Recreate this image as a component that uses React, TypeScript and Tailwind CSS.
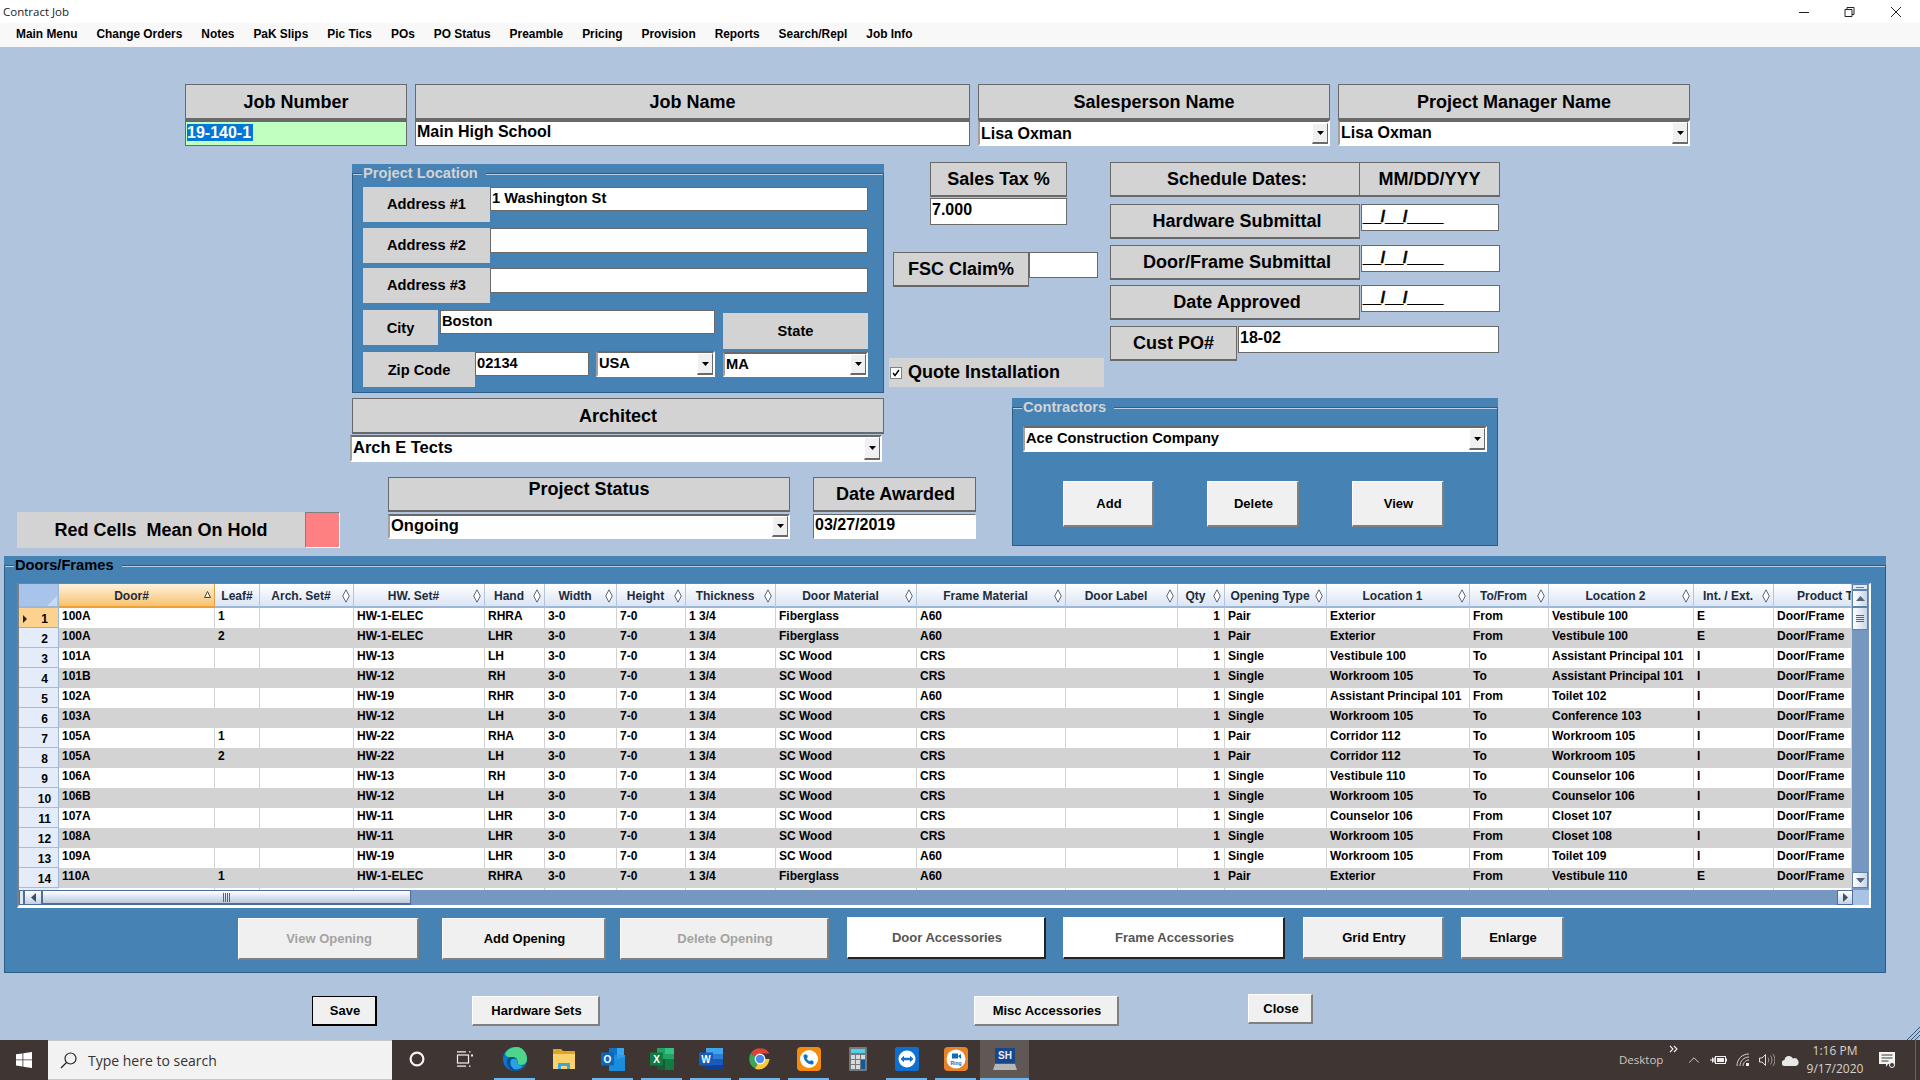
import type { ReactNode } from 'react'
import { ChevronUp, Phone } from 'lucide-react'

const menus = ['Main Menu', 'Change Orders', 'Notes', 'PaK Slips', 'Pic Tics', 'POs', 'PO Status', 'Preamble', 'Pricing', 'Provision', 'Reports', 'Search/Repl', 'Job Info']

const columns = [
  { label: 'Door#', w: 'w-[156px]', sort: true },
  { label: 'Leaf#', w: 'w-[45px]', plain: true },
  { label: 'Arch. Set#', w: 'w-[94px]' },
  { label: 'HW. Set#', w: 'w-[131px]' },
  { label: 'Hand', w: 'w-[60px]' },
  { label: 'Width', w: 'w-[72px]' },
  { label: 'Height', w: 'w-[69px]' },
  { label: 'Thickness', w: 'w-[90px]' },
  { label: 'Door Material', w: 'w-[141px]' },
  { label: 'Frame Material', w: 'w-[149px]' },
  { label: 'Door Label', w: 'w-[112px]' },
  { label: 'Qty', w: 'w-[47px]' },
  { label: 'Opening Type', w: 'w-[102px]' },
  { label: 'Location 1', w: 'w-[143px]' },
  { label: 'To/From', w: 'w-[79px]' },
  { label: 'Location 2', w: 'w-[145px]' },
  { label: 'Int. / Ext.', w: 'w-[80px]' },
  { label: 'Product Type', w: 'w-[78px]', clipped: true },
]

const rows = [
  ['100A', '1', 'HW-1-ELEC', 'RHRA', 'Fiberglass', 'A60', 'Pair', 'Exterior', 'From', 'Vestibule 100', 'E'],
  ['100A', '2', 'HW-1-ELEC', 'LHR', 'Fiberglass', 'A60', 'Pair', 'Exterior', 'From', 'Vestibule 100', 'E'],
  ['101A', '', 'HW-13', 'LH', 'SC Wood', 'CRS', 'Single', 'Vestibule 100', 'To', 'Assistant Principal 101', 'I'],
  ['101B', '', 'HW-12', 'RH', 'SC Wood', 'CRS', 'Single', 'Workroom 105', 'To', 'Assistant Principal 101', 'I'],
  ['102A', '', 'HW-19', 'RHR', 'SC Wood', 'A60', 'Single', 'Assistant Principal 101', 'From', 'Toilet 102', 'I'],
  ['103A', '', 'HW-12', 'LH', 'SC Wood', 'CRS', 'Single', 'Workroom 105', 'To', 'Conference 103', 'I'],
  ['105A', '1', 'HW-22', 'RHA', 'SC Wood', 'CRS', 'Pair', 'Corridor 112', 'To', 'Workroom 105', 'I'],
  ['105A', '2', 'HW-22', 'LH', 'SC Wood', 'CRS', 'Pair', 'Corridor 112', 'To', 'Workroom 105', 'I'],
  ['106A', '', 'HW-13', 'RH', 'SC Wood', 'CRS', 'Single', 'Vestibule 110', 'To', 'Counselor 106', 'I'],
  ['106B', '', 'HW-12', 'LH', 'SC Wood', 'CRS', 'Single', 'Workroom 105', 'To', 'Counselor 106', 'I'],
  ['107A', '', 'HW-11', 'LHR', 'SC Wood', 'CRS', 'Single', 'Counselor 106', 'From', 'Closet 107', 'I'],
  ['108A', '', 'HW-11', 'LHR', 'SC Wood', 'CRS', 'Single', 'Workroom 105', 'From', 'Closet 108', 'I'],
  ['109A', '', 'HW-19', 'LHR', 'SC Wood', 'A60', 'Single', 'Workroom 105', 'From', 'Toilet 109', 'I'],
  ['110A', '1', 'HW-1-ELEC', 'RHRA', 'Fiberglass', 'A60', 'Pair', 'Exterior', 'From', 'Vestibule 110', 'E'],
]

function rowCells(r: string[]) {
  return [r[0], r[1], '', r[2], r[3], '3-0', '7-0', '1 3/4', r[4], r[5], '', '1', r[6], r[7], r[8], r[9], r[10], 'Door/Frame']
}

const textSizes = {
  sm: 'text-[14.67px]',
  md: 'text-[16px]',
  lg: 'text-[16.5px]',
}

// big grey caption with a border
function Caption({ children, className = '' }: { children: ReactNode; className?: string }) {
  return (
    <div className={`flex items-center justify-center border border-[#696969] border-b-2 bg-[#d3d3d3] text-[18px] font-bold ${className}`}>
      {children}
    </div>
  )
}

// smaller caption inside the location box, no border
function Tag({ children, className = '' }: { children: ReactNode; className?: string }) {
  return <div className={`flex items-center justify-center bg-[#d3d3d3] text-[14.67px] font-bold ${className}`}>{children}</div>
}

function Field({ children, className = '', size = 'md' }: { children?: ReactNode; className?: string; size?: 'sm' | 'md' | 'lg' }) {
  return (
    <div className={`overflow-hidden whitespace-nowrap border border-[#696969] bg-white pl-px font-bold leading-[20px] ${textSizes[size]} ${className}`}>
      {children}
    </div>
  )
}

function DateMask({ className = '' }: { className?: string }) {
  return (
    <Field className={`pt-[2px] [-webkit-text-stroke:0.5px_#000] ${className}`}>__/__/____</Field>
  )
}

function Combo({ value, className = '', size = 'md' }: { value: string; className?: string; size?: 'sm' | 'md' | 'lg' }) {
  return (
    <div className={`flex border-2 border-t-[#696969] border-l-[#a0a0a0] border-r-white border-b-white bg-white ${className}`}>
      <div className={`flex-1 overflow-hidden whitespace-nowrap pl-px font-bold leading-[21px] ${textSizes[size]}`}>{value}</div>
      <div className="flex w-[16px] items-center justify-center border border-t-white border-l-white border-r-[#696969] border-b-2 border-b-[#696969] bg-[#f0f0f0]">
        <svg width="7" height="4" viewBox="0 0 7 4"><path d="M0 0h7L3.5 4z" fill="#000" /></svg>
      </div>
    </div>
  )
}

function Btn({ children, className = '', disabled, white, focused }: { children: ReactNode; className?: string; disabled?: boolean; white?: boolean; focused?: boolean }) {
  let look = 'bg-[#f0f0f0] border-t-white border-l-white border-b-[#808080] border-r-[#808080] text-black'
  if (white) look = 'bg-white border-t-white border-l-white border-b-[#222] border-r-[#222] text-[#555]'
  if (disabled) look = 'bg-[#f0f0f0] border-t-white border-l-white border-b-[#808080] border-r-[#808080] text-[#a3a3a3]'
  if (focused) look = 'bg-[#f0f0f0] border-t-black border-l-black border-b-black border-r-black text-black'
  return (
    <button className={`flex shrink-0 items-center justify-center border border-b-2 border-r-2 pl-[2px] text-[13px] font-bold ${look} ${className}`}>
      {children}
    </button>
  )
}

function GroupBox({ title, dark, className = '', children }: { title: string; dark?: boolean; className?: string; children: ReactNode }) {
  return (
    <div className={`shrink-0 bg-[#4682b4] ${className}`}>
      <fieldset className="h-full border border-[#2c5d87] shadow-[inset_0_1px_0_#bcd1e6]">
        <legend className={`ml-[9px] bg-[#4682b4] pl-px pr-2 text-[14.67px] font-bold leading-[18px] ${dark ? 'text-black' : 'text-[#d3d3d3]'}`}>{title}</legend>
        {children}
      </fieldset>
    </div>
  )
}

function SortGlyph({ up }: { up?: boolean }) {
  if (up) {
    return (
      <svg width="7" height="7" viewBox="0 0 7 7" className="mr-[3px] mb-[4px] shrink-0">
        <path d="M3.5.5L6.5 6.5H.5z" fill="#fff3d6" stroke="#444" />
      </svg>
    )
  }
  return (
    <svg width="8" height="14" viewBox="0 0 8 14" className="mr-[3px] shrink-0">
      <path d="M4 .8L7.3 7 4 13.2.7 7z" fill="#fff" stroke="#5a6675" />
    </svg>
  )
}

function DoorGrid() {
  return (
    <div className="flex h-[325px] w-[1854px] flex-col border-t border-l-2 border-t-[#808080] border-l-[#808080] border-r-2 border-b-[3px] border-r-white border-b-white bg-[#7698c0]">
      <div className="flex h-[306px]">
        <div className="w-[1833px] overflow-hidden">
          <table className="w-[1833px] table-fixed border-separate border-spacing-0 text-[12px] font-bold">
            <thead>
              <tr>
                <th className="h-[24px] w-[40px] border-r border-b-2 border-r-[#9db7d6] border-b-[#9db7d6] bg-[#a9c4ea] p-0 align-bottom">
                  <svg width="10" height="10" viewBox="0 0 10 10" className="ml-auto mr-px"><path d="M10 0v10H0z" fill="#c9daf2" /></svg>
                </th>
                {columns.map((c) => (
                  <th
                    key={c.label}
                    className={`h-[24px] border-r border-b-2 p-0 pt-[2px] font-bold text-[#1c2b3c] ${c.w} ${
                      c.sort
                        ? 'border-r-[#e2a24c] border-b-[#f0a030] bg-linear-to-b from-[#fdf1da] to-[#f8c26c]'
                        : 'border-r-[#b3c6de] border-b-[#9db7d6] bg-linear-to-b from-white to-[#dbe5f3]'
                    }`}
                  >
                    {c.clipped ? (
                      <div className="overflow-hidden whitespace-nowrap pl-[23px] text-left">{c.label}</div>
                    ) : (
                      <div className="flex h-full items-center overflow-hidden">
                        <span className="flex-1 whitespace-nowrap text-center">{c.label}</span>
                        {!c.plain && <SortGlyph up={c.sort} />}
                      </div>
                    )}
                  </th>
                ))}
              </tr>
            </thead>
            <tbody>
              {rows.map((r, i) => (
                <tr key={i}>
                  <td
                    className={`relative h-[20px] border-r border-b p-0 pl-3 pt-[3px] text-center align-top leading-[16px] ${
                      i === 0 ? 'border-r-[#9db7d6] border-b-[#f0a030] bg-[#fdd28e]' : 'border-r-[#9db7d6] border-b-[#a8bcd6] bg-[#e3ecf8]'
                    }`}
                  >
                    {i === 0 && (
                      <svg width="4" height="8" viewBox="0 0 4 8" className="absolute left-[4px] top-[7px]"><path d="M0 0l4 4-4 4z" fill="#222" /></svg>
                    )}
                    {i + 1}
                  </td>
                  {rowCells(r).map((v, j) => (
                    <td
                      key={j}
                      className={`h-[20px] overflow-hidden whitespace-nowrap border-r border-r-[#d3d3d3] p-0 pl-[3px] align-top leading-[16px] ${
                        i % 2 ? 'bg-[#d3d3d3]' : 'bg-white'
                      } ${j === 11 ? 'pr-[4px] text-right' : ''}`}
                    >
                      {v}
                    </td>
                  ))}
                </tr>
              ))}
              <tr>
                <td className="h-[20px] bg-[#e3ecf8]" />
                {columns.map((c) => (
                  <td key={c.label} className="h-[20px] border-r border-r-[#d3d3d3] bg-white" />
                ))}
              </tr>
            </tbody>
          </table>
        </div>
        {/* vertical scrollbar */}
        <div className="flex w-[16px] flex-col bg-[#7698c0]">
          <div className="flex h-[6px] items-center justify-center border border-[#5f82ad] bg-[#dfe8f5]"><div className="h-px w-[8px] bg-[#5f82ad]" /></div>
          <div className="flex h-[17px] items-center justify-center border border-[#5f82ad] bg-linear-to-r from-white to-[#c9d6e8]">
            <svg width="9" height="5" viewBox="0 0 9 5"><path d="M4.5 0L9 5H0z" fill="#51657e" /></svg>
          </div>
          <div className="flex h-[23px] flex-col items-center justify-center gap-px border border-[#5f82ad] bg-linear-to-r from-white to-[#c9d6e8]">
            <div className="h-px w-[8px] bg-[#51657e]" />
            <div className="h-px w-[8px] bg-[#51657e]" />
            <div className="h-px w-[8px] bg-[#51657e]" />
            <div className="h-px w-[8px] bg-[#51657e]" />
          </div>
          <div className="flex-1" />
          <div className="mb-[2px] flex h-[16px] items-center justify-center border border-[#5f82ad] bg-linear-to-r from-white to-[#c9d6e8]">
            <svg width="9" height="5" viewBox="0 0 9 5"><path d="M0 0h9L4.5 5z" fill="#51657e" /></svg>
          </div>
        </div>
      </div>
      {/* horizontal scrollbar */}
      <div className="flex h-[15px]">
        <div className="h-full w-[5px] border border-[#4d6f99] bg-[#dfe8f5]" />
        <div className="flex h-full w-[18px] items-center justify-center border border-[#4d6f99] bg-linear-to-b from-white to-[#c3d1e4]">
          <svg width="5" height="9" viewBox="0 0 5 9"><path d="M5 0v9L0 4.5z" fill="#3c4f66" /></svg>
        </div>
        <div className="flex h-full w-[369px] items-center justify-center border border-b-2 border-[#4d6f99] bg-linear-to-b from-white to-[#b9c9de]">
          <div className="flex gap-px">
            <div className="h-[9px] w-px bg-[#51657e]" />
            <div className="h-[9px] w-px bg-[#51657e]" />
            <div className="h-[9px] w-px bg-[#51657e]" />
            <div className="h-[9px] w-px bg-[#51657e]" />
          </div>
        </div>
        <div className="flex-1" />
        <div className="flex h-full w-[16px] items-center justify-center border border-[#4d6f99] bg-linear-to-b from-white to-[#c3d1e4]">
          <svg width="5" height="9" viewBox="0 0 5 9"><path d="M0 0v9l5-4.5z" fill="#3c4f66" /></svg>
        </div>
        <div className="h-full w-[16px] bg-[#a9c3e6]" />
      </div>
    </div>
  )
}

function TaskSlot({ children, open, active }: { children: ReactNode; open?: boolean; active?: boolean }) {
  return (
    <div className={`flex h-[40px] w-[49px] shrink-0 flex-col items-center ${active ? 'bg-[#5f5854]' : ''}`}>
      <div className="flex h-[38px] items-center justify-center">{children}</div>
      <div className={`h-[2px] ${active ? 'w-full bg-[#6cb6f2]' : open ? 'w-[41px] bg-[#6cb6f2]' : 'w-[41px]'}`} />
    </div>
  )
}

function TaskIcons() {
  return (
    <>
      <TaskSlot>
        <svg width="16" height="16" viewBox="0 0 16 16"><circle cx="8" cy="8" r="6.4" fill="none" stroke="#f4f4f4" strokeWidth="2.2" /></svg>
      </TaskSlot>
      <TaskSlot>
        <svg width="18" height="18" viewBox="0 0 18 18" fill="none" stroke="#f2f2f2" strokeWidth="1.2" className="-ml-[2px]">
          <rect x="1.5" y="5" width="11" height="8" />
          <path d="M1 1.8h9M1 16.2h9M13 1.8h1.5M13 16.2h1.5" />
          <rect x="15" y="4.5" width="2" height="2" fill="#f2f2f2" stroke="none" />
        </svg>
      </TaskSlot>
      <TaskSlot open>
        <svg width="26" height="26" viewBox="0 0 26 26">
          <circle cx="13" cy="13" r="12" fill="#0b78cf" />
          <path d="M3 8C6 2 12 0 17 1.300C22 3 25 8 25 13c0 4-3 6-6 6-3 0-5-2-4-4 .6-1.500-1-4-4.500-4C7 11 5 12 3 8z" fill="#4fd48c" />
          <path d="M5 14c2-4 8-4 10-.5 1 2 0 4 2 5.500 1.500 1 4 .8 5.500-.5C20 23 16 25 13 25c-5 0-9-5-8-11z" fill="#0a4f92" />
          <path d="M9 14c2-2 6-1.500 6 1 0 3 3 5 6 5-2 2.500-5 4-8 3.500-3-1-6-6-4-9.500z" fill="#2aa3e6" />
        </svg>
      </TaskSlot>
      <TaskSlot>
        <svg width="24" height="20" viewBox="0 0 24 20">
          <path d="M1 0h8l2 2h12v17a1 1 0 01-1 1H2a1 1 0 01-1-1z" fill="#e0a526" />
          <path d="M1 5h22v14a1 1 0 01-1 1H2a1 1 0 01-1-1z" fill="#fbd36b" />
          <path d="M6 20v-6h12v6h-3v-3H9v3z" fill="#3ba6e0" />
        </svg>
      </TaskSlot>
      <TaskSlot open>
        <svg width="24" height="24" viewBox="0 0 24 24">
          <path d="M8 1h15v22H8z" fill="#0f74c8" />
          <path d="M16 1h7v7h-7z" fill="#38a7ee" />
          <path d="M8 8h8v7H8z" fill="#1b8fdc" />
          <path d="M16 8h8v8h-8z" fill="#2a9fe8" />
          <path d="M8 14l16-4v14H8z" fill="#1a8ddc" />
          <rect x="0" y="5.500" width="13" height="13" fill="#0b67bd" />
          <text x="6.500" y="15.500" textAnchor="middle" fontFamily="Liberation Sans" fontWeight="700" fontSize="10" fill="#fff">O</text>
        </svg>
      </TaskSlot>
      <TaskSlot open>
        <svg width="24" height="24" viewBox="0 0 24 24">
          <path d="M7 1h8v11H7z" fill="#21a366" />
          <path d="M15 1h9v6h-9z" fill="#33c481" />
          <path d="M15 7h9v5h-9z" fill="#21a366" />
          <path d="M7 12h8v11H7z" fill="#185c37" />
          <path d="M15 12h9v11h-9z" fill="#107c41" />
          <rect x="0" y="5.500" width="13" height="13" fill="#107c41" />
          <text x="6.500" y="15.500" textAnchor="middle" fontFamily="Liberation Sans" fontWeight="700" fontSize="10" fill="#fff">X</text>
        </svg>
      </TaskSlot>
      <TaskSlot open>
        <svg width="24" height="24" viewBox="0 0 24 24">
          <path d="M7 1h17v6H7z" fill="#41a5ee" />
          <path d="M7 7h17v5H7z" fill="#2b7cd3" />
          <path d="M7 12h17v6H7z" fill="#185abd" />
          <path d="M7 18h17v5H7z" fill="#103f91" />
          <rect x="0" y="5.500" width="14" height="13" fill="#185abd" />
          <text x="7" y="15.500" textAnchor="middle" fontFamily="Liberation Sans" fontWeight="700" fontSize="10" fill="#fff">W</text>
        </svg>
      </TaskSlot>
      <TaskSlot open>
        <svg width="24" height="24" viewBox="0 0 24 24">
          <path d="M12 12L2.600 6.500A11 11 0 0121.500 6.500H12z" fill="#db4437" />
          <path d="M12 12l-5 9.500A11 11 0 012.600 6.500z" fill="#3aa757" />
          <path d="M12 12h9.500A11 11 0 017 21.800z" fill="#fcc934" />
          <circle cx="12" cy="12" r="5.400" fill="#fff" />
          <circle cx="12" cy="12" r="4.200" fill="#4c8bf5" />
        </svg>
      </TaskSlot>
      <TaskSlot open>
        <div className="flex h-[24px] w-[24px] items-center justify-center rounded-[4px] bg-[#f58a0b]">
          <div className="flex h-[18px] w-[18px] items-center justify-center rounded-full bg-white">
            <Phone size={11} className="text-[#0b6fc0]" fill="#0b6fc0" />
          </div>
        </div>
      </TaskSlot>
      <TaskSlot>
        <svg width="18" height="24" viewBox="0 0 18 24">
          <rect width="18" height="24" rx="1" fill="#76797c" />
          <rect x="2" y="2" width="14" height="4" fill="#4fd1ea" />
          <path d="M2 8h4v4H2zM7 8h4v4H7zM2 13h4v4H2zM7 13h4v4H7zM2 18h4v4H2zM7 18h4v4H7zM12 8h4v4h-4z" fill="#d7dadc" />
          <rect x="12" y="13" width="4" height="9" fill="#0f5a9c" />
        </svg>
      </TaskSlot>
      <TaskSlot open>
        <div className="flex h-[24px] w-[24px] items-center justify-center rounded-[2px] bg-[#0e6fd1]">
          <svg width="18" height="18" viewBox="0 0 18 18">
            <circle cx="9" cy="9" r="8.500" fill="#fff" />
            <path d="M2.500 9L6 5.800v2h6V5.800L15.500 9 12 12.200v-2H6v2z" fill="#0e6fd1" />
          </svg>
        </div>
      </TaskSlot>
      <TaskSlot open>
        <div className="flex h-[24px] w-[24px] items-center justify-center rounded-[4px] bg-[#e8832a]">
          <svg width="20" height="20" viewBox="0 0 20 20">
            <circle cx="10" cy="10" r="9.500" fill="#fff" />
            <rect x="6" y="4.500" width="6" height="5" fill="#0f6cb6" />
            <path d="M12 7l3-2v5z" fill="#0f6cb6" />
            <text x="10" y="16" textAnchor="middle" fontFamily="Liberation Sans" fontWeight="700" fontSize="5" fill="#0f6cb6">Ring</text>
          </svg>
        </div>
      </TaskSlot>
      <TaskSlot active>
        <svg width="24" height="22" viewBox="0 0 24 22">
          <rect x="2" y="0" width="20" height="15" fill="#17468a" />
          <text x="12" y="11" textAnchor="middle" fontFamily="Liberation Sans" fontWeight="700" fontSize="10" fill="#e8eef8">SH</text>
          <path d="M2 16h20l2 6H0z" fill="#b6b6b6" />
        </svg>
      </TaskSlot>
    </>
  )
}

function Tray() {
  return (
    <div className="ml-auto flex h-[40px] items-center text-[#d5d2d0]">
      <div className="w-[46px] whitespace-nowrap font-['Open_Sans',sans-serif] text-[11.5px] text-[#c9c6c4]">Desktop</div>
      <svg width="17" height="24" viewBox="0 0 17 24" className="self-start" fill="none" stroke="#f0f0f0" strokeWidth="1.100">
        <path d="M5 6l3 3-3 3M9 6l3 3-3 3" />
      </svg>
      <div className="flex w-[24px] justify-center"><ChevronUp size={18} strokeWidth={1.300} /></div>
      <div className="flex w-[24px] justify-center">
        <svg width="17" height="12" viewBox="0 0 17 12" fill="none" stroke="#f0f0f0">
          <path d="M0 6h4M2.500 3.500v5M4 4h1v4H4z" />
          <rect x="5.500" y="2.500" width="10" height="7" />
          <rect x="7" y="4" width="7" height="4" fill="#f0f0f0" stroke="none" />
          <path d="M16.500 4.500v3" />
        </svg>
      </div>
      <div className="flex w-[25px] justify-center">
        <svg width="14" height="14" viewBox="0 0 14 14" fill="none" stroke="#d5d2d0">
          <path d="M1 13C1 6 6 1 13 1M4 13c0-5 4-9 9-9M7 13c0-3 2.500-6 6-6" />
          <rect x="10" y="10" width="3" height="3" fill="#f0f0f0" stroke="none" />
        </svg>
      </div>
      <div className="flex w-[23px] justify-center">
        <svg width="16" height="14" viewBox="0 0 16 14" fill="none" stroke="#e0e0e0">
          <path d="M.5 5h2.500L6.500 1.500v11L3 9H.5z" />
          <path d="M9 4.500c1 1.500 1 3.500 0 5M11.500 2.500c2 3 2 6 0 9M14 1c2.500 4 2.500 8 0 12" stroke="#a09c98" />
        </svg>
      </div>
      <div className="flex w-[25px] justify-center">
        <svg width="17" height="11" viewBox="0 0 17 11">
          <path d="M3 11a3 3 0 01-.5-6A4.500 4.500 0 0111 3.500 3.800 3.800 0 0114 11z" fill="#e8e8e8" />
        </svg>
      </div>
      <div className="w-[64px] text-center font-['Open_Sans',sans-serif] text-[12px] leading-[18px]">
        <div>1:16 PM</div>
        <div>9/17/2020</div>
      </div>
      <div className="flex w-[40px] justify-center">
        <svg width="16" height="16" viewBox="0 0 16 16">
          <path d="M0 0h16v12H9l-2 3v-3H0z" fill="#f4f4f4" />
          <path d="M2.500 3h11M2.500 6h11M2.500 9h7" stroke="#3f3633" />
          <circle cx="13" cy="13" r="2.500" fill="#3f3633" stroke="#f4f4f4" />
        </svg>
      </div>
      <div className="ml-2 h-full w-px bg-[#6a625e]" />
      <div className="w-[4px]" />
    </div>
  )
}

export default function App() {
  return (
    <div className="flex h-[1080px] w-[1920px] flex-col overflow-hidden bg-[#b0c4de] font-['Liberation_Sans',Arial,sans-serif] text-black">
      {/* Title bar */}
      <div className="flex h-[23px] shrink-0 items-center bg-white">
        <span className="pl-[3px] font-['Open_Sans',sans-serif] text-[11.5px] text-[#222]">Contract Job</span>
        <div className="ml-auto flex items-center">
          <svg width="46" height="14" viewBox="0 0 46 14" stroke="#222" fill="none"><path d="M18 7.500h10" /></svg>
          <svg width="46" height="14" viewBox="0 0 46 14" stroke="#222" fill="none"><path d="M18 4.500h7v7h-7zM20 4.500v-2h7v7h-2" /></svg>
          <svg width="46" height="14" viewBox="0 0 46 14" stroke="#222" fill="none" className="mr-px"><path d="M18 2l10 10M28 2L18 12" /></svg>
        </div>
      </div>

      {/* Menu */}
      <div className="flex h-[24px] shrink-0 items-center bg-[#f8f8f8] pl-[6.500px] text-[11.9px] font-bold">
        {menus.map((m) => (
          <span key={m} className="px-[9.500px]">{m}</span>
        ))}
      </div>

      {/* Header fields */}
      <div className="ml-[185px] mt-[37px] flex gap-[8px]">
        <div className="w-[222px]">
          <Caption className="h-[36px] pt-px">Job Number</Caption>
          <div className="h-[26px] border border-t-2 border-[#696969] bg-[#c0ffc0] pl-px pt-[1px] text-[16px] font-bold leading-[19px]">
            <span className="bg-[#0078d7] pr-[2px] text-white">19-140-1</span>
          </div>
        </div>
        <div className="w-[555px]">
          <Caption className="h-[36px] pt-px">Job Name</Caption>
          <Field className="h-[26px] border-t-2">Main High School</Field>
        </div>
        <div className="w-[352px]">
          <Caption className="h-[36px] pt-px">Salesperson Name</Caption>
          <Combo value="Lisa Oxman" className="h-[26px] pt-px" />
        </div>
        <div className="w-[352px]">
          <Caption className="h-[36px] pt-px">Project Manager Name</Caption>
          <Combo value="Lisa Oxman" className="h-[26px]" />
        </div>
      </div>

      {/* Location, tax, schedule */}
      <div className="mt-[16px] flex items-start">
        <GroupBox title="Project Location" className="ml-[352px] mt-[2px] h-[229px] w-[532px]">
          <div className="px-[10px]">
            <div className="mt-[5px] flex items-start">
              <Tag className="h-[35px] w-[127px] pb-[2px]">Address #1</Tag>
              <Field size="sm" className="h-[24px] w-[378px]">1 Washington St</Field>
            </div>
            <div className="mt-[6px] flex items-start">
              <Tag className="h-[35px] w-[127px] pb-[2px]">Address #2</Tag>
              <Field className="h-[25px] w-[378px]" />
            </div>
            <div className="mt-[5px] flex items-start">
              <Tag className="h-[35px] w-[127px] pb-[2px]">Address #3</Tag>
              <Field className="h-[25px] w-[378px]" />
            </div>
            <div className="mt-[7px] flex items-start">
              <Tag className="h-[35px] w-[75px]">City</Tag>
              <Field size="sm" className="ml-[2px] h-[24px] w-[275px]">Boston</Field>
              <Tag className="ml-[8px] mt-[3px] h-[36px] w-[145px]">State</Tag>
            </div>
            <div className="mt-[3px] flex items-start">
              <Tag className="h-[35px] w-[112px]">Zip Code</Tag>
              <Field size="sm" className="h-[24px] w-[114px]">02134</Field>
              <Combo value="USA" size="sm" className="ml-[7px] -mt-px h-[26px] w-[119px]" />
              <Combo value="MA" size="sm" className="ml-[8px] h-[25px] w-[145px]" />
            </div>
          </div>
        </GroupBox>

        <div className="ml-[5px] flex w-[215px] shrink-0 flex-col">
          <div className="ml-[41px] w-[137px]">
            <Caption className="h-[35px] pt-px">Sales Tax %</Caption>
            <Field className="mt-px h-[27px] pt-px">7.000</Field>
          </div>
          <div className="ml-[4px] mt-[27px] flex items-start">
            <Caption className="h-[35px] w-[136px]">FSC Claim%</Caption>
            <Field className="h-[26px] w-[69px]" />
          </div>
          <div className="mt-[71px] flex h-[29px] items-center bg-[#d3d3d3] pl-px text-[18px] font-bold">
            <span className="mr-[6px] flex h-[12px] w-[12px] items-center justify-center border border-[#808080] bg-white">
              <svg width="8" height="8" viewBox="0 0 8 8" fill="none" stroke="#000" strokeWidth="1.400"><path d="M1 4l2 2.500L7 1" /></svg>
            </span>
            Quote Installation
          </div>
        </div>

        <div className="ml-[6px] w-[390px] shrink-0">
          <div className="flex">
            <Caption className="h-[35px] w-[250px] pl-[4px] pt-px">Schedule Dates:</Caption>
            <Caption className="h-[35px] w-[140px] border-l-0 pt-px">MM/DD/YYY</Caption>
          </div>
          <div className="mt-[7px] flex items-start">
            <Caption className="h-[35px] w-[250px] pl-[4px] pt-px">Hardware Submittal</Caption>
            <DateMask className="ml-px h-[27px] w-[138px]" />
          </div>
          <div className="mt-[6px] flex items-start">
            <Caption className="h-[35px] w-[250px] pl-[4px] pt-px">Door/Frame Submittal</Caption>
            <DateMask className="ml-px h-[27px] w-[139px]" />
          </div>
          <div className="mt-[5px] flex items-start">
            <Caption className="h-[35px] w-[250px] pl-[4px] pt-px">Date Approved</Caption>
            <DateMask className="ml-px h-[27px] w-[139px]" />
          </div>
          <div className="mt-[6px] flex items-start">
            <Caption className="h-[35px] w-[127px] pt-px">Cust PO#</Caption>
            <Field className="ml-px h-[27px] w-[261px] pt-px">18-02</Field>
          </div>
        </div>
      </div>

      {/* Hold legend, architect, status, contractors */}
      <div className="mt-[5px] flex h-[150px] items-start">
        <div className="ml-[17px] mt-[114px] flex h-[36px] shrink-0">
          <div className="flex w-[288px] items-center justify-center bg-[#d3d3d3] text-[18px] font-bold whitespace-pre">Red Cells  Mean On Hold</div>
          <div className="w-[35px] border border-t-[#808080] border-l-[#808080] border-b-white border-r-white bg-[#ff8080]" />
        </div>
        <div className="ml-[10px] w-[626px] shrink-0">
          <Caption className="ml-[2px] h-[36px] w-[532px] pt-px">Architect</Caption>
          <Combo value="Arch E Tects" size="lg" className="mt-px h-[27px] w-[532px]" />
          <div className="ml-[38px] mt-[15px] flex gap-[23px]">
            <div className="w-[402px]">
              <Caption className="h-[35px] pb-[10px]">Project Status</Caption>
              <Combo value="Ongoing" size="lg" className="mt-[2px] h-[25px] [&>div:first-child]:leading-[19px]" />
            </div>
            <div className="w-[163px]">
              <Caption className="h-[35px] pl-[2px]">Date Awarded</Caption>
              <Field className="mt-[2px] h-[25px] border-r-white border-b-white">03/27/2019</Field>
            </div>
          </div>
        </div>
        <GroupBox title="Contractors" className="ml-[36px] h-[148px] w-[486px]">
          <div className="ml-[10px] mt-[10px]">
            <Combo value="Ace Construction Company" size="sm" className="h-[26px] w-[464px]" />
            <div className="mt-[29px] flex">
              <Btn className="ml-[40px] h-[46px] w-[91px]">Add</Btn>
              <Btn className="ml-[53px] h-[46px] w-[92px]">Delete</Btn>
              <Btn className="ml-[53px] h-[46px] w-[92px]">View</Btn>
            </div>
          </div>
        </GroupBox>
      </div>

      {/* Doors/Frames */}
      <GroupBox title="Doors/Frames" dark className="ml-[4px] mt-[8px] h-[417px] w-[1882px]">
        <div className="ml-[12px] mt-[9px]">
          <DoorGrid />
        </div>
        <div className="ml-[233px] mt-[9px] flex h-[43px] items-start">
          <Btn disabled className="mt-px h-[42px] w-[181px]">View Opening</Btn>
          <Btn className="ml-[23px] mt-px h-[42px] w-[164px]">Add Opening</Btn>
          <Btn disabled className="ml-[14px] mt-px h-[42px] w-[209px]">Delete Opening</Btn>
          <Btn white className="ml-[18px] h-[42px] w-[199px]">Door Accessories</Btn>
          <Btn white className="ml-[17px] h-[42px] w-[222px]">Frame Accessories</Btn>
          <Btn className="ml-[18px] h-[42px] w-[141px]">Grid Entry</Btn>
          <Btn className="ml-[17px] h-[42px] w-[103px]">Enlarge</Btn>
        </div>
      </GroupBox>

      {/* Bottom buttons */}
      <div className="mt-[21px] flex h-[46px] items-start">
        <Btn focused className="ml-[312px] mt-[2px] h-[30px] w-[65px]">Save</Btn>
        <Btn className="ml-[95px] mt-[2px] h-[30px] w-[128px]">Hardware Sets</Btn>
        <Btn className="ml-[374px] mt-[2px] h-[30px] w-[145px]">Misc Accessories</Btn>
        <Btn className="ml-[129px] h-[30px] w-[65px]">Close</Btn>
        <svg width="13" height="14" viewBox="0 0 13 14" className="ml-auto self-end" fill="none" stroke="#33507a">
          <path d="M0 14L13 1M4 14L13 5M8 14l5-5" />
        </svg>
      </div>

      {/* Taskbar */}
      <div className="flex h-[40px] shrink-0 bg-[#3f3633]">
        <div className="flex w-[48px] items-center justify-center">
          <svg width="16" height="16" viewBox="0 0 16 16" fill="#fff">
            <path d="M0 2.300L6.500 1.400V7.500H0zM7.300 1.300L16 0V7.500H7.300zM0 8.300H6.500V14.500L0 13.600zM7.300 8.300H16V16L7.300 14.700z" />
          </svg>
        </div>
        <div className="flex w-[344px] items-center border-y border-[#c8c8c8] bg-[#f2f2f2] pl-[12px] font-['Open_Sans',sans-serif] text-[14px] text-[#333]">
          <svg width="17" height="17" viewBox="0 0 17 17" fill="none" stroke="#222" strokeWidth="1.200" className="mr-[11px]">
            <circle cx="10.500" cy="6.500" r="5.500" />
            <path d="M6.500 10.500L1 16" />
          </svg>
          Type here to search
        </div>
        <TaskIcons />
        <Tray />
      </div>
    </div>
  )
}
